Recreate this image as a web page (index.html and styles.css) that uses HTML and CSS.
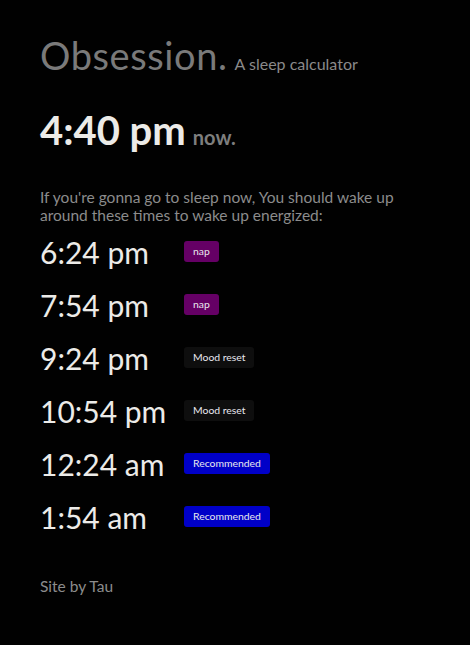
FILE: index.html
```html
<!DOCTYPE html>
<html>
<head>
<meta charset="utf-8">
<link rel="stylesheet" href="styles.css">
</head>
<body>
<main class="page">
  <header class="head">
    <h1 class="title">Obsession.</h1>
    <span class="subtitle">A sleep calculator</span>
  </header>
  <div class="now">
    <span class="now-time">4:40 pm</span>
    <span class="now-label">now.</span>
  </div>
  <p class="intro">If you're gonna go to sleep now, You should wake up around these times to wake up energized:</p>
  <ul class="times">
    <li class="row"><span class="time">6:24 pm</span><span class="badge nap">nap</span></li>
    <li class="row"><span class="time">7:54 pm</span><span class="badge nap">nap</span></li>
    <li class="row"><span class="time">9:24 pm</span><span class="badge mood">Mood reset</span></li>
    <li class="row"><span class="time">10:54 pm</span><span class="badge mood">Mood reset</span></li>
    <li class="row"><span class="time">12:24 am</span><span class="badge rec">Recommended</span></li>
    <li class="row"><span class="time">1:54 am</span><span class="badge rec">Recommended</span></li>
  </ul>
  <footer class="foot">Site by Tau</footer>
</main>
</body>
</html>
```
FILE: styles.css
```css
html, body {
  margin: 0;
  background: #010101;
}
body {
  font-family: "Lato", "Noto Sans", sans-serif;
  color: #ededea;
}
.page {
  padding: 32px 40px 0 40px;
}
.head {
  display: flex;
  align-items: baseline;
  gap: 7px;
}
.title {
  margin: 0;
  font-size: 38px;
  font-weight: 400;
  color: #7a7a7a;
  letter-spacing: 0.6px;
}
.subtitle {
  font-size: 16px;
  color: #8a8a8a;
}
.now {
  display: flex;
  align-items: baseline;
  gap: 7px;
  margin-top: 28px;
}
.now-time {
  font-size: 40px;
  font-weight: 700;
  color: #ecebe8;
}
.now-label {
  font-size: 20px;
  color: #7e7e7e;
  font-weight: 700;
}
.intro {
  margin: 34px 0 0 0;
  font-size: 15.5px;
  line-height: 18px;
  color: #8c8c8c;
  max-width: 370px;
}
.times {
  list-style: none;
  margin: 1px 0 0 0;
  padding: 0;
}
.row {
  display: flex;
  align-items: center;
  height: 53px;
}
.time {
  width: 144px;
  font-size: 30px;
  color: #ecebe8;
}
.badge {
  font-size: 10.4px;
  line-height: 21px;
  height: 21px;
  padding: 0 9px;
  border-radius: 3px;
  color: #e8e8ee;
}
.nap { background: #650065; }
.mood { background: #0e0e0e; }
.rec { background: #0000c8; }
.foot {
  margin-top: 34px;
  font-size: 15.5px;
  color: #8c8c8c;
}
```
